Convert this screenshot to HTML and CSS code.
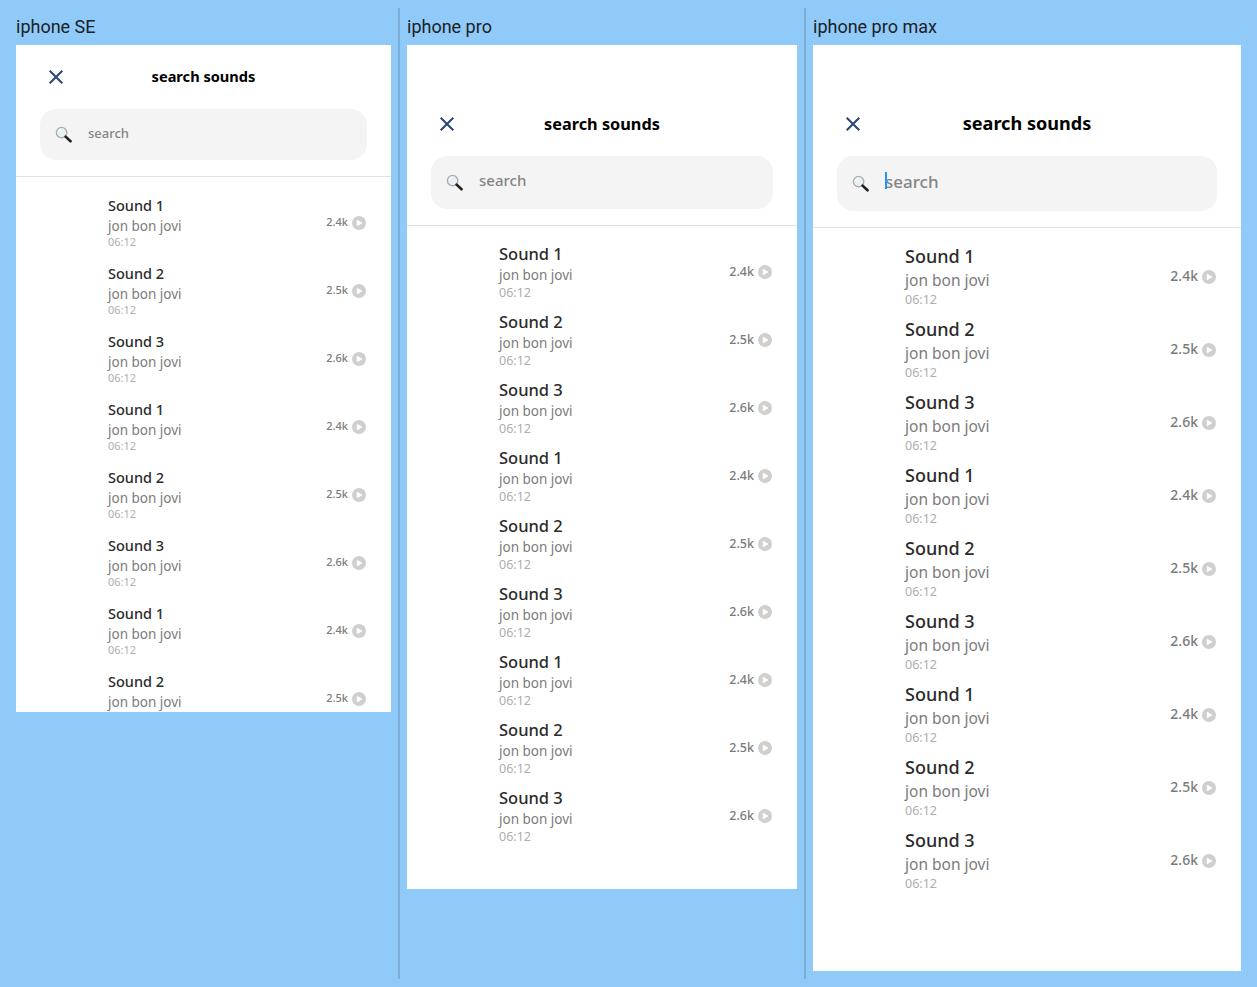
FILE: index.html
```html
<!DOCTYPE html>
<html lang="en">
<head>
<meta charset="utf-8">
<title>search sounds</title>
<link rel="stylesheet" href="styles.css">
</head>
<body>
<svg class="defs" width="0" height="0" aria-hidden="true">
  <defs>
    <symbol id="i-close" viewBox="0 0 14 14"><path d="M.7.7l12.6 12.6M13.3.7L.7 13.3" fill="none" stroke="currentColor" stroke-width="2"/></symbol>
    <symbol id="i-search" viewBox="0 0 16 16"><circle cx="6.2" cy="6.2" r="4.9" fill="#e8f1f3" stroke="#a9adb0" stroke-width="1.3"/><path d="M2.9 6a3.3 3.3 0 0 1 3-3" fill="none" stroke="#fff" stroke-width="1"/><path d="M10 10l4.6 4.4" stroke="#222" stroke-width="2.5" stroke-linecap="round"/></symbol>
    <symbol id="i-play" viewBox="0 0 14 14"><circle cx="7" cy="7" r="7" fill="#cfcfcf"/><path d="M5.2 4.2v5.6L10 7z" fill="#fff" stroke="#fff" stroke-width=".8" stroke-linejoin="round"/></symbol>
  </defs>
</svg>
<main class="board">

<section class="col col-se">
  <h2 class="label">iphone SE</h2>
  <div class="phone">
    <header class="head"><svg class="close"><use href="#i-close"/></svg><h1 class="title">search sounds</h1></header>
    <div class="search"><svg class="glass"><use href="#i-search"/></svg><span class="ph">search</span></div>
    <ul class="list">
      <li class="row"><div class="info"><span class="name">Sound 1</span><span class="artist">jon bon jovi</span><span class="time">06:12</span></div><div class="stat"><span class="count">2.4k</span><svg class="play"><use href="#i-play"/></svg></div></li>
      <li class="row"><div class="info"><span class="name">Sound 2</span><span class="artist">jon bon jovi</span><span class="time">06:12</span></div><div class="stat"><span class="count">2.5k</span><svg class="play"><use href="#i-play"/></svg></div></li>
      <li class="row"><div class="info"><span class="name">Sound 3</span><span class="artist">jon bon jovi</span><span class="time">06:12</span></div><div class="stat"><span class="count">2.6k</span><svg class="play"><use href="#i-play"/></svg></div></li>
      <li class="row"><div class="info"><span class="name">Sound 1</span><span class="artist">jon bon jovi</span><span class="time">06:12</span></div><div class="stat"><span class="count">2.4k</span><svg class="play"><use href="#i-play"/></svg></div></li>
      <li class="row"><div class="info"><span class="name">Sound 2</span><span class="artist">jon bon jovi</span><span class="time">06:12</span></div><div class="stat"><span class="count">2.5k</span><svg class="play"><use href="#i-play"/></svg></div></li>
      <li class="row"><div class="info"><span class="name">Sound 3</span><span class="artist">jon bon jovi</span><span class="time">06:12</span></div><div class="stat"><span class="count">2.6k</span><svg class="play"><use href="#i-play"/></svg></div></li>
      <li class="row"><div class="info"><span class="name">Sound 1</span><span class="artist">jon bon jovi</span><span class="time">06:12</span></div><div class="stat"><span class="count">2.4k</span><svg class="play"><use href="#i-play"/></svg></div></li>
      <li class="row"><div class="info"><span class="name">Sound 2</span><span class="artist">jon bon jovi</span><span class="time">06:12</span></div><div class="stat"><span class="count">2.5k</span><svg class="play"><use href="#i-play"/></svg></div></li>
    </ul>
  </div>
</section>

<section class="col col-pro">
  <h2 class="label">iphone pro</h2>
  <div class="phone">
    <header class="head"><svg class="close"><use href="#i-close"/></svg><h1 class="title">search sounds</h1></header>
    <div class="search"><svg class="glass"><use href="#i-search"/></svg><span class="ph">search</span></div>
    <ul class="list">
      <li class="row"><div class="info"><span class="name">Sound 1</span><span class="artist">jon bon jovi</span><span class="time">06:12</span></div><div class="stat"><span class="count">2.4k</span><svg class="play"><use href="#i-play"/></svg></div></li>
      <li class="row"><div class="info"><span class="name">Sound 2</span><span class="artist">jon bon jovi</span><span class="time">06:12</span></div><div class="stat"><span class="count">2.5k</span><svg class="play"><use href="#i-play"/></svg></div></li>
      <li class="row"><div class="info"><span class="name">Sound 3</span><span class="artist">jon bon jovi</span><span class="time">06:12</span></div><div class="stat"><span class="count">2.6k</span><svg class="play"><use href="#i-play"/></svg></div></li>
      <li class="row"><div class="info"><span class="name">Sound 1</span><span class="artist">jon bon jovi</span><span class="time">06:12</span></div><div class="stat"><span class="count">2.4k</span><svg class="play"><use href="#i-play"/></svg></div></li>
      <li class="row"><div class="info"><span class="name">Sound 2</span><span class="artist">jon bon jovi</span><span class="time">06:12</span></div><div class="stat"><span class="count">2.5k</span><svg class="play"><use href="#i-play"/></svg></div></li>
      <li class="row"><div class="info"><span class="name">Sound 3</span><span class="artist">jon bon jovi</span><span class="time">06:12</span></div><div class="stat"><span class="count">2.6k</span><svg class="play"><use href="#i-play"/></svg></div></li>
      <li class="row"><div class="info"><span class="name">Sound 1</span><span class="artist">jon bon jovi</span><span class="time">06:12</span></div><div class="stat"><span class="count">2.4k</span><svg class="play"><use href="#i-play"/></svg></div></li>
      <li class="row"><div class="info"><span class="name">Sound 2</span><span class="artist">jon bon jovi</span><span class="time">06:12</span></div><div class="stat"><span class="count">2.5k</span><svg class="play"><use href="#i-play"/></svg></div></li>
      <li class="row"><div class="info"><span class="name">Sound 3</span><span class="artist">jon bon jovi</span><span class="time">06:12</span></div><div class="stat"><span class="count">2.6k</span><svg class="play"><use href="#i-play"/></svg></div></li>
    </ul>
  </div>
</section>

<section class="col col-max">
  <h2 class="label">iphone pro max</h2>
  <div class="phone">
    <header class="head"><svg class="close"><use href="#i-close"/></svg><h1 class="title">search sounds</h1></header>
    <div class="search"><svg class="glass"><use href="#i-search"/></svg><span class="ph caret">search</span></div>
    <ul class="list">
      <li class="row"><div class="info"><span class="name">Sound 1</span><span class="artist">jon bon jovi</span><span class="time">06:12</span></div><div class="stat"><span class="count">2.4k</span><svg class="play"><use href="#i-play"/></svg></div></li>
      <li class="row"><div class="info"><span class="name">Sound 2</span><span class="artist">jon bon jovi</span><span class="time">06:12</span></div><div class="stat"><span class="count">2.5k</span><svg class="play"><use href="#i-play"/></svg></div></li>
      <li class="row"><div class="info"><span class="name">Sound 3</span><span class="artist">jon bon jovi</span><span class="time">06:12</span></div><div class="stat"><span class="count">2.6k</span><svg class="play"><use href="#i-play"/></svg></div></li>
      <li class="row"><div class="info"><span class="name">Sound 1</span><span class="artist">jon bon jovi</span><span class="time">06:12</span></div><div class="stat"><span class="count">2.4k</span><svg class="play"><use href="#i-play"/></svg></div></li>
      <li class="row"><div class="info"><span class="name">Sound 2</span><span class="artist">jon bon jovi</span><span class="time">06:12</span></div><div class="stat"><span class="count">2.5k</span><svg class="play"><use href="#i-play"/></svg></div></li>
      <li class="row"><div class="info"><span class="name">Sound 3</span><span class="artist">jon bon jovi</span><span class="time">06:12</span></div><div class="stat"><span class="count">2.6k</span><svg class="play"><use href="#i-play"/></svg></div></li>
      <li class="row"><div class="info"><span class="name">Sound 1</span><span class="artist">jon bon jovi</span><span class="time">06:12</span></div><div class="stat"><span class="count">2.4k</span><svg class="play"><use href="#i-play"/></svg></div></li>
      <li class="row"><div class="info"><span class="name">Sound 2</span><span class="artist">jon bon jovi</span><span class="time">06:12</span></div><div class="stat"><span class="count">2.5k</span><svg class="play"><use href="#i-play"/></svg></div></li>
      <li class="row"><div class="info"><span class="name">Sound 3</span><span class="artist">jon bon jovi</span><span class="time">06:12</span></div><div class="stat"><span class="count">2.6k</span><svg class="play"><use href="#i-play"/></svg></div></li>
    </ul>
  </div>
</section>

</main>
</body>
</html>
```
FILE: styles.css
```css
* { box-sizing: border-box; }
html, body { margin: 0; padding: 0; }
body { background: #90caf9; height: 987px; overflow: hidden; }
.defs { position: absolute; }

.board { display: flex; align-items: flex-start; padding-top: 8px; }
.col { height: 971px; display: flex; flex-direction: column; }
.col-se { width: 400px; padding-left: 16px; border-right: 2px solid #7cadd7; }
.col-pro { width: 406px; padding-left: 7px; border-right: 2px solid #7cadd7; }
.col-max { padding-left: 7px; }

.label {
  margin: 0; height: 37px; padding-top: 8px;
  font: 400 18px/22px Roboto, sans-serif; color: #1b2126;
}

.phone { background: #fff; overflow: hidden; font-family: "Noto Sans", sans-serif; }
.col-se .phone {
  width: 375px; height: 667px;
  --top: 0px; --search: 51px; --title: 14.6px; --title-pad: 2px; --ph: 13px; --ph-lift: 4px;
  --name: 14.5px; --artist: 13.5px; --time: 11px; --count: 11px; --count-lift: 4px;
  --pitch: 68px; --list: 12px; --name-lh: 20px; --name-gap: 2px; --time-gap: 0px; --time-lh: 14px; --info-lift: 2px;
}
.col-pro .phone {
  width: 390px; height: 844px;
  --top: 47px; --search: 53px; --title: 16.3px; --title-pad: 0px; --ph: 15px; --ph-lift: 6px;
  --name: 16.5px; --artist: 13.5px; --time: 12.5px; --count: 12.5px; --count-lift: 2px;
  --pitch: 68px; --list: 12px; --name-lh: 21px; --name-gap: 2px; --time-gap: 0px; --time-lh: 17px; --info-lift: 0px;
}
.col-max .phone {
  width: 428px; height: 926px;
  --top: 47px; --search: 55px; --title: 18.1px; --title-pad: 2px; --ph: 17px; --ph-lift: 4px;
  --name: 18px; --artist: 15.5px; --time: 12.5px; --count: 14px; --count-lift: 2px;
  --pitch: 73px; --list: 12px; --name-lh: 25px; --name-gap: 2px; --time-gap: 1px; --time-lh: 20px; --info-lift: 0px;
}

.head {
  height: 64px; margin-top: var(--top); position: relative; padding-bottom: var(--title-pad);
  display: flex; align-items: center; justify-content: center;
}
.close { position: absolute; left: 33px; top: 25px; width: 14px; height: 14px; color: #2c4373; }
.title { margin: 0; font-size: var(--title); line-height: 1; font-weight: 700; color: #000; }

.search {
  height: var(--search); margin: 0 24px 16px; padding-left: 15px;
  display: flex; align-items: center; gap: 16px;
  background: #f4f4f4; border-radius: 16px;
}
.glass { width: 17px; height: 17px; flex: none; }
.ph { font-size: var(--ph); font-weight: 500; color: #858585; padding-bottom: var(--ph-lift); }
.caret { position: relative; }
.caret::after { content: ""; position: absolute; left: 0; top: 2px; height: 17px; width: 2px; background: #2196f3; }

.list {
  list-style: none; margin: 0; padding: var(--list) 25px 0 92px;
  border-top: 1px solid #e2e2e2;
}
.row { height: var(--pitch); display: flex; align-items: center; justify-content: space-between; }
.info { display: flex; flex-direction: column; padding-bottom: var(--info-lift); }
.name { font-size: var(--name); line-height: var(--name-lh); font-weight: 500; color: #2b2b2b; margin-bottom: var(--name-gap); }
.artist { font-size: var(--artist); line-height: 18px; color: #7c7c7c; margin-bottom: var(--time-gap); }
.time { font-size: var(--time); line-height: var(--time-lh); color: #aeaeae; }
.stat { display: flex; align-items: center; gap: 4px; }
.count { font-size: var(--count); font-weight: 500; color: #7b7b7b; padding-bottom: var(--count-lift); }
.play { width: 14px; height: 14px; flex: none; }
```
